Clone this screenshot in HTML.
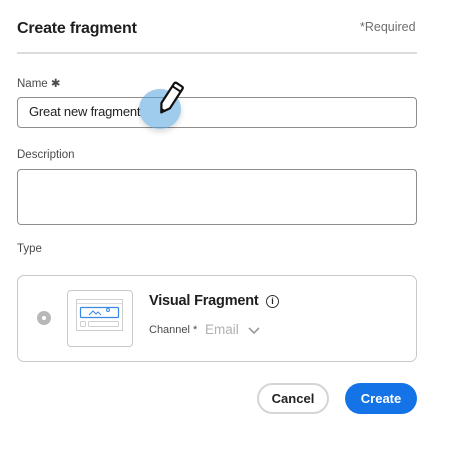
<!DOCTYPE html>
<html><head><style>
*{box-sizing:border-box;margin:0;padding:0}
body{width:450px;height:450px;background:#fff;font-family:"Liberation Sans",sans-serif;position:relative;overflow:hidden;color:#222}
.a{position:absolute}
</style></head><body>
<div class="a" style="left:17px;top:20px;font-size:16px;font-weight:bold;color:#1f1f1f;letter-spacing:-0.2px">Create fragment</div>
<div class="a" style="left:360px;top:20px;font-size:12.5px;color:#6e6e6e">*Required</div>
<div class="a" style="left:17px;top:52px;width:400px;height:2px;background:#dcdcdc"></div>
<div class="a" style="left:17px;top:76px;font-size:11.5px;color:#4a4a4a">Name ✱</div>
<div class="a" style="left:17px;top:97px;width:400px;height:31px;border:1px solid #8e8e8e;border-radius:4px"></div>
<div class="a" style="left:29px;top:104px;font-size:13px;color:#222;letter-spacing:-0.2px">Great new fragment</div>
<div class="a" style="left:17px;top:149px;font-size:11.5px;color:#4a4a4a">Description</div>
<div class="a" style="left:17px;top:169px;width:400px;height:56px;border:1px solid #8e8e8e;border-radius:4px"></div>
<div class="a" style="left:17px;top:243px;font-size:11.5px;color:#4a4a4a">Type</div>
<div class="a" style="left:17px;top:275px;width:400px;height:87px;border:1px solid #c8c8c8;border-radius:7px"></div>
<div class="a" style="left:37px;top:311px;width:14px;height:14px;border-radius:50%;background:#b8b8b8"></div>
<div class="a" style="left:42px;top:316px;width:4px;height:4px;border-radius:50%;background:#fff"></div>
<div class="a" style="left:67px;top:290px;width:66px;height:57px;border:1px solid #c8c8c8;border-radius:4px"></div>
<svg class="a" style="left:76px;top:299px" width="48" height="33" viewBox="0 0 48 33">
<rect x="0.5" y="0.5" width="46" height="31" fill="#fff" stroke="#cfcfcf"/>
<line x1="0.5" y1="4.5" x2="46.5" y2="4.5" stroke="#dcdcdc"/>
<rect x="4.5" y="8.5" width="38" height="10" rx="1" fill="none" stroke="#3a87e6" stroke-width="1.2"/>
<path d="M13 16 L17 12 L20 15 L22 13 L25 16" fill="none" stroke="#3a87e6" stroke-width="1"/>
<circle cx="32" cy="11" r="1.5" fill="none" stroke="#3a87e6"/>
<rect x="4.5" y="22.5" width="5" height="5" rx="1" fill="none" stroke="#cfcfcf"/>
<rect x="12.5" y="22.5" width="30" height="5" rx="1" fill="none" stroke="#cfcfcf"/>
</svg>
<div class="a" style="left:149px;top:293px;font-size:14.5px;font-weight:bold;color:#1f1f1f;letter-spacing:-0.2px">Visual Fragment</div>
<div class="a" style="left:266px;top:295px;width:13px;height:13px;border:1.3px solid #333;border-radius:50%;font-size:9px;text-align:center;line-height:10px;font-weight:bold">i</div>
<div class="a" style="left:149px;top:324px;font-size:11px;color:#4a4a4a">Channel *</div>
<div class="a" style="left:205px;top:322px;font-size:13.5px;color:#b0b0b0">Email</div>
<svg class="a" style="left:248px;top:327px" width="12" height="8"><path d="M1 1 L6 6 L11 1" fill="none" stroke="#9a9a9a" stroke-width="1.6"/></svg>
<div class="a" style="left:257px;top:383px;width:72px;height:31px;border:2px solid #d5d5d5;border-radius:16px;font-size:13px;font-weight:bold;text-align:center;line-height:27px;color:#222">Cancel</div>
<div class="a" style="left:345px;top:383px;width:72px;height:31px;background:#1473e6;border-radius:16px;font-size:13px;font-weight:bold;text-align:center;line-height:31px;color:#fff">Create</div>
<div class="a" style="left:139px;top:89px;width:42px;height:40px;border-radius:50%;background:rgba(80,160,220,.55);box-shadow:0 3px 6px rgba(0,0,0,.15)"></div>
<svg class="a" style="left:150px;top:78px" width="40" height="42" viewBox="0 0 40 42">
<g transform="rotate(33 20 21)"><path d="M15 6 Q15 4 17 4 L23 4 Q25 4 25 6 L25 29 L20 37 L15 29 Z" fill="#fff" stroke="#111" stroke-width="2.2" stroke-linejoin="round"/><line x1="15" y1="9" x2="25" y2="9" stroke="#111" stroke-width="2"/><path d="M17 33 L23 33 L20 37 Z" fill="#111"/></g>
</svg>
</body></html>
